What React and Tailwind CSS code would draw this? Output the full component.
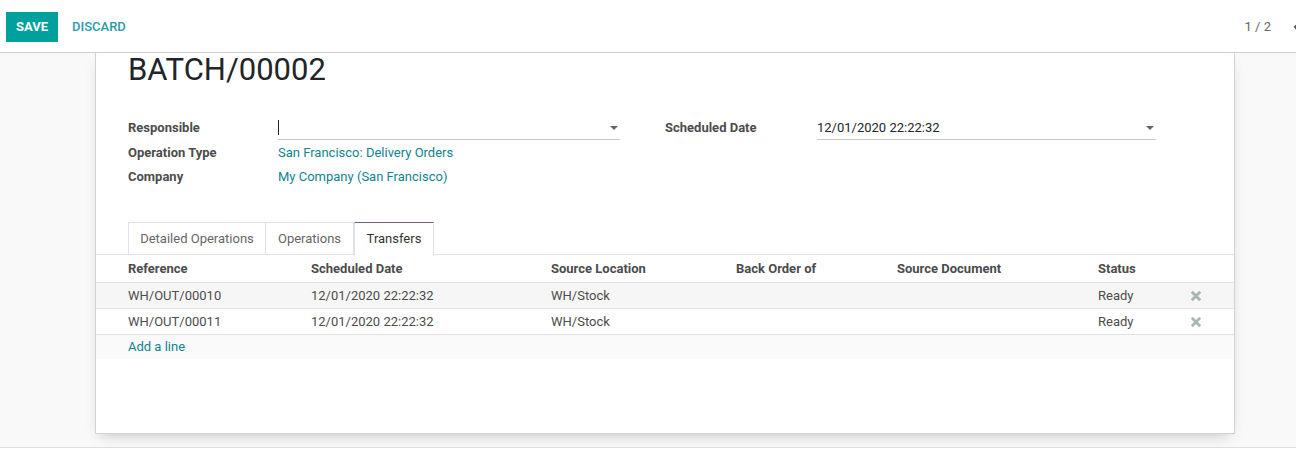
import React from 'react'

const Caret = () => (
  <svg width="8" height="4" viewBox="0 0 8 4" className="mr-[1px] shrink-0">
    <path d="M0 0h8L4 4z" fill="#666" />
  </svg>
)

const Times = () => (
  <svg width="10" height="10" viewBox="0 0 10 10">
    <path d="M1.8 1.8l6.4 6.4M8.2 1.8l-6.4 6.4" stroke="#a9b4b6" strokeWidth="2.8" strokeLinecap="square" />
  </svg>
)

const FieldRow = ({ label, children, h = 'h-[24px]' }) => (
  <div className={`flex items-center ${h}`}>
    <div className="w-[150px] shrink-0 font-bold text-[#4c4c4c]">{label}</div>
    <div className="flex-1">{children}</div>
  </div>
)

const InputBox = ({ value, cursor }) => (
  <div className="flex h-[23px] items-center justify-between border-b border-[#c8c8c8] pr-[1px]">
    <span className="flex items-center text-[#212529]">
      {cursor && <span className="inline-block h-[15px] w-px bg-[#222]" />}
      {value}
    </span>
    <Caret />
  </div>
)

const columns = [
  { label: 'Reference', w: 'w-[183px]' },
  { label: 'Scheduled Date', w: 'w-[240px]' },
  { label: 'Source Location', w: 'w-[185px]' },
  { label: 'Back Order of', w: 'w-[161px]' },
  { label: 'Source Document', w: 'w-[201px]' },
  { label: 'Status', w: 'w-[88px]' },
]

const rows = [
  { ref: 'WH/OUT/00010', date: '12/01/2020 22:22:32', loc: 'WH/Stock', status: 'Ready', bg: 'bg-[#f6f6f6]' },
  { ref: 'WH/OUT/00011', date: '12/01/2020 22:22:32', loc: 'WH/Stock', status: 'Ready', bg: 'bg-white' },
]

export default function App() {
  return (
    <div
      className="relative h-[456px] w-[1296px] overflow-hidden bg-[#f9f9f9] text-[13px] text-[#4c4c4c]"
      style={{ fontFamily: 'Roboto, "Noto Sans", sans-serif' }}
    >
      {/* control panel */}
      <div className="flex h-[53px] items-center border-b border-[#cfcfcf] bg-white pl-[6px] pt-[2px]">
        <button className="h-[30px] w-[52px] bg-[#00a09d] text-[13px] font-bold text-white">SAVE</button>
        <button className="ml-[14px] text-[13px] font-medium text-[#2a9bab]">DISCARD</button>
        <div className="ml-auto mr-[-7px] flex items-center pb-[1px]">
          <span className="text-[13px] text-[#666]">1 / 2</span>
          <span className="ml-[22px] w-[10px]">
            <svg width="8" height="10" viewBox="0 0 8 10">
              <path d="M6 1L2 5l4 4" stroke="#555" strokeWidth="2" fill="none" />
            </svg>
          </span>
        </div>
      </div>

      {/* sheet */}
      <div className="ml-[95px] h-[381px] w-[1140px] border-x border-b border-[#d3d3d3] bg-white shadow-[0_6px_14px_-6px_rgba(0,0,0,0.25)]">
        <h1 className="pl-[32px] pt-[1px] text-[31px] leading-[32px] text-[#212529]">BATCH/00002</h1>

        <div className="mt-[29px] flex pl-[32px]">
          <div className="w-[492px]">
            <FieldRow label="Responsible" h="h-[26px]">
              <InputBox value="" cursor />
            </FieldRow>
            <FieldRow label="Operation Type">
              <span className="text-[#11838f]">San Francisco: Delivery Orders</span>
            </FieldRow>
            <FieldRow label="Company">
              <span className="text-[#11838f]">My Company (San Francisco)</span>
            </FieldRow>
          </div>
          <div className="ml-[45px] w-[491px]">
            <div className="flex h-[26px] items-center">
              <div className="w-[152px] shrink-0 font-bold text-[#4c4c4c]">Scheduled Date</div>
              <div className="flex-1">
                <InputBox value="12/01/2020 22:22:32" />
              </div>
            </div>
          </div>
        </div>

        {/* tabs */}
        <div className="mt-[33px] flex h-[33px] border-b border-[#dee2e6] pl-[32px]">
          <div className="flex h-[33px] w-[138px] items-center justify-center border border-b-0 border-[#dee2e6] text-[#666]">
            Detailed Operations
          </div>
          <div className="flex h-[33px] w-[88px] items-center justify-center border-y border-r border-b-0 border-[#dee2e6] text-[#666]">
            Operations
          </div>
          <div className="relative z-10 flex h-[34px] w-[80px] items-center justify-center border-x border-t border-x-[#dee2e6] border-t-[#7c5f83] bg-white pb-px text-[#333]">
            Transfers
          </div>
        </div>

        {/* table */}
        <div className="flex h-[28px] items-center border-b border-[#dee2e6] pl-[32px] font-bold">
          {columns.map((c) => (
            <div key={c.label} className={c.w}>{c.label}</div>
          ))}
        </div>
        {rows.map((r) => (
          <div key={r.ref} className={`flex h-[26px] items-center border-b border-[#e3e3e3] pl-[32px] ${r.bg}`}>
            <div className="w-[183px]">{r.ref}</div>
            <div className="w-[240px]">{r.date}</div>
            <div className="w-[185px]">{r.loc}</div>
            <div className="w-[161px]" />
            <div className="w-[201px]" />
            <div className="w-[93px]">{r.status}</div>
            <div className="flex w-[10px] items-center"><Times /></div>
          </div>
        ))}
        <div className="flex h-[24px] items-center bg-[#fafafa] pl-[32px]">
          <span className="text-[#11838f]">Add a line</span>
        </div>
      </div>

      {/* bottom */}
      <div className="absolute bottom-0 left-0 h-[9px] w-full border-t border-[#dedede] bg-white" />
    </div>
  )
}
